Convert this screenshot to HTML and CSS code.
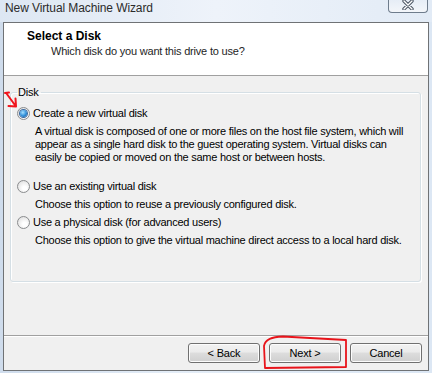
FILE: index.html
```html
<!DOCTYPE html>
<html>
<head>
  <meta name="viewport" content="width=device-width, initial-scale=1.0">
  <title>New Virtual Machine Wizard</title>
  <link rel="stylesheet" href="styles.css">
</head>
<body>
  <div class="window">
    <div class="titlebar">
      <span class="title">New Virtual Machine Wizard</span>
      <span class="close">
        <svg width="12" height="10" viewBox="0 0 12 10">
          <path d="M2 1 L10 9 M10 1 L2 9" stroke="#4b5563" stroke-width="3.4" stroke-linecap="round"/>
          <path d="M2 1 L10 9 M10 1 L2 9" stroke="#ffffff" stroke-width="1.4" stroke-linecap="round"/>
        </svg>
      </span>
    </div>
    <div class="client">
      <div class="header">
        <div class="header-title">Select a Disk</div>
        <div class="header-sub">Which disk do you want this drive to use?</div>
      </div>
      <div class="content">
        <fieldset class="group">
          <legend>Disk</legend>
          <div class="option option-first">
            <div class="option-label"><span class="radio checked"></span>Create a new virtual disk</div>
            <div class="option-desc">A virtual disk is composed of one or more files on the host file system, which will<br>appear as a single hard disk to the guest operating system. Virtual disks can<br>easily be copied or moved on the same host or between hosts.</div>
          </div>
          <div class="option">
            <div class="option-label"><span class="radio"></span>Use an existing virtual disk</div>
            <div class="option-desc">Choose this option to reuse a previously configured disk.</div>
          </div>
          <div class="option">
            <div class="option-label"><span class="radio"></span>Use a physical disk (for advanced users)</div>
            <div class="option-desc">Choose this option to give the virtual machine direct access to a local hard disk.</div>
          </div>
        </fieldset>
      </div>
      <div class="footer">
        <button class="button">&lt; <u>B</u>ack</button>
        <button class="button"><u>N</u>ext &gt;</button>
        <button class="button">Cancel</button>
      </div>
    </div>
  </div>

  <svg class="marks" width="432" height="373" viewBox="0 0 432 373">
    <path d="M5 93 L9 92.5 M6.5 93.5 L16 106.5 M16 106.5 L8.5 106 M16 106.5 L15.5 98.5" fill="none" stroke="#f0141c" stroke-width="2" stroke-linecap="round" stroke-linejoin="round"/>
    <path d="M264 346 C265 339 272 337 283 336.5 L346 340 L346 367 L265 368 Z" fill="none" stroke="#e8141b" stroke-width="1.8" stroke-linejoin="round"/>
  </svg>
</body>
</html>
```

FILE: styles.css
```css
body {
  margin: 0;
  width: 432px;
  height: 373px;
  overflow: hidden;
  position: relative;
  font-family: 'Liberation Sans', Arial, sans-serif;
  font-size: 11px;
  color: #000;
  background: linear-gradient(to right, #cfdcec, #e4edf7 40%, #dce7f4);
}
.window {
  display: flex;
  flex-direction: column;
  height: 373px;
}
.titlebar {
  height: 22px;
  display: flex;
  justify-content: space-between;
  align-items: flex-start;
  padding: 0 4px 0 5px;
  background: linear-gradient(to right, #dde7f3, #eef3fa 50%, #e2ebf6);
}
.title {
  font-size: 12px;
  line-height: 16px;
  color: #2b2b2b;
  letter-spacing: -0.1px;
}
.close {
  width: 38px;
  height: 12px;
  display: flex;
  justify-content: center;
  align-items: flex-start;
  border: 1px solid #6e7c8c;
  border-top: none;
  border-radius: 0 0 4px 4px;
  background: linear-gradient(#e6edf6, #f3f6fa);
}
.close svg {
  display: block;
}
.client {
  margin: 0 3px;
  height: 349px;
  box-sizing: border-box;
  border: 1px solid #6f7275;
  background-color: #f0f0f0;
  display: flex;
  flex-direction: column;
}
.header {
  height: 53px;
  box-sizing: border-box;
  background-color: #ffffff;
  border-bottom: 1px solid #a0a0a0;
  padding-top: 6px;
}
.header-title {
  font-size: 12px;
  font-weight: bold;
  line-height: 15px;
  padding-left: 23px;
}
.header-sub {
  line-height: 15px;
  padding-left: 47px;
  color: #1e1e1e;
  letter-spacing: -0.2px;
}
.content {
  height: 259px;
  box-sizing: border-box;
  padding-top: 9px;
}
.group {
  margin: 0 7px 0 6px;
  height: 197px;
  box-sizing: border-box;
  padding: 0 6px;
  border: 1px solid #d5dfe5;
  border-radius: 3px;
  box-shadow: inset 1px 1px 0 #ffffff, 1px 1px 0 #ffffff;
}
.group legend {
  padding: 0 2px 0 1px;
  line-height: 14px;
  letter-spacing: -0.2px;
}
.option {
  margin-top: 4px;
}
.option-first {
  margin-top: 7px;
  margin-bottom: 15px;
}
.option-label {
  display: flex;
  align-items: center;
  line-height: 15px;
  letter-spacing: -0.25px;
}
.option-desc {
  margin-top: 4px;
  padding-left: 18px;
  line-height: 13px;
  letter-spacing: -0.25px;
}
.radio {
  width: 13px;
  height: 13px;
  box-sizing: border-box;
  margin-right: 3px;
  border-radius: 50%;
  border: 1px solid #8a8c8e;
  background: radial-gradient(circle at 60% 65%, #ffffff 20%, #e4e4e4 75%, #d0d0d0);
  display: flex;
  justify-content: center;
  align-items: center;
}
.radio.checked::after {
  content: "";
  width: 7px;
  height: 7px;
  border-radius: 50%;
  background: radial-gradient(circle at 40% 35%, #a9e1ff, #2f8ed8 55%, #164f8e);
  box-shadow: 0 0 0 1px #3b6aa0;
}
.footer {
  flex: 1;
  border-top: 1px solid #a0a0a0;
  box-shadow: inset 0 1px 0 #ffffff;
  display: flex;
  justify-content: flex-end;
  align-items: flex-start;
  gap: 9px;
  padding: 7px 6px 0 0;
}
.button {
  width: 72px;
  height: 20px;
  padding: 0;
  font-family: 'Liberation Sans', Arial, sans-serif;
  font-size: 11px;
  letter-spacing: -0.2px;
  color: #000;
  border: 1px solid #707070;
  border-radius: 3px;
  background: linear-gradient(#f2f2f2, #ebebeb 45%, #dddddd 50%, #cfcfcf);
  box-shadow: inset 0 0 0 1px #fcfcfc;
}
.button u {
  text-decoration: none;
}
.marks {
  position: absolute;
  left: 0;
  top: 0;
  pointer-events: none;
}
```
